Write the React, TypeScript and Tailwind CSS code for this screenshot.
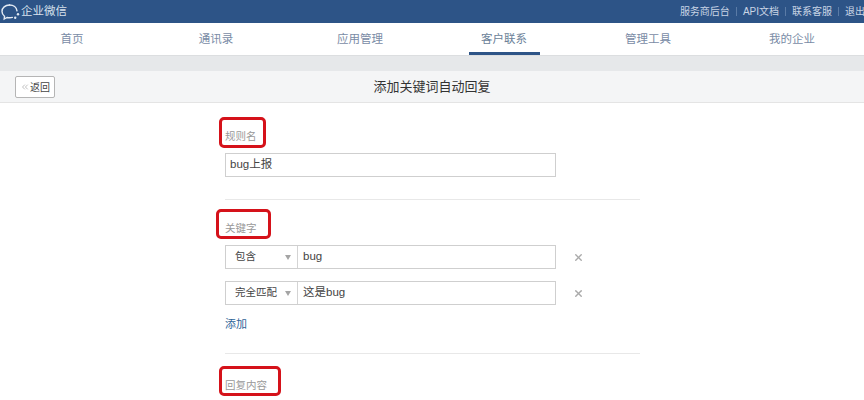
import { ChevronsLeft, X } from 'lucide-react';

const NAV_ITEMS = ['首页', '通讯录', '应用管理', '客户联系', '管理工具', '我的企业'];
const TOP_LINKS = ['服务商后台', 'API文档', '联系客服', '退出'];
const FONT = "font-['Liberation_Sans','Noto_Sans_CJK_SC',sans-serif]";

function Logo() {
  return (
    <svg width="21" height="20" viewBox="0 0 21 20" fill="none" className="shrink-0">
      <path
        d="M9.5 3C5.2 3 2 5.8 2 9.4c0 2 .9 3.6 2.5 4.8L4.2 17l2.9-1.5c.7.2 1.5.3 2.4.3 1 0 2-.1 2.9-.4"
        stroke="#e3eaf3"
        strokeWidth="1.4"
        strokeLinecap="round"
      />
      <path d="M9.5 3c4 0 7.1 2.4 7.5 5.9" stroke="#e3eaf3" strokeWidth="1.4" strokeLinecap="round" />
      <circle cx="15.2" cy="15.8" r="1.2" fill="#e3eaf3" />
      <circle cx="18" cy="12.2" r="1.2" fill="#e3eaf3" />
    </svg>
  );
}

function RedBox({ className }: { className: string }) {
  return <div className={`absolute rounded-[5px] border-[3px] border-[#d5121a] ${className}`} />;
}

function KeywordRow({ match, value }: { match: string; value: string }) {
  return (
    <div className="flex h-6 items-center">
      <div className="flex h-6 w-[331px] border border-[#cfcfcf] bg-white text-[11.5px] text-[#444]">
        <div className="flex w-[72px] items-center justify-between border-r border-[#d4d4d4] pl-[9px] pr-[6px]">
          <span className="whitespace-nowrap text-[10.5px]">{match}</span>
          <span className="h-0 w-0 shrink-0 border-x-[3px] border-t-[5px] border-x-transparent border-t-[#a5a5a5]" />
        </div>
        <div className="flex items-center pl-[5px]">{value}</div>
      </div>
      <X className="ml-[17px] h-[11px] w-[11px] text-[#aaaaaa]" strokeWidth={3} />
    </div>
  );
}

export default function App() {
  return (
    <div className={`relative h-[400px] w-[864px] overflow-hidden bg-white ${FONT}`}>
      <div className="flex h-[23px] items-center justify-between bg-[#2d5487] text-white">
        <div className="flex items-center text-[11.5px] text-[#d9e2ee]">
          <Logo />
          <span>企业微信</span>
        </div>
        <div className="-mr-[1px] flex items-center whitespace-nowrap text-[10px] text-[#c9d5e5]">
          {TOP_LINKS.map((link, i) => (
            <div key={link} className="flex items-center">
              {i > 0 && <span className="mx-[6px] h-[9px] w-px bg-[#5a7ba6]" />}
              <span>{link}</span>
            </div>
          ))}
        </div>
      </div>

      <div className="grid h-[32px] grid-cols-6 bg-white">
        {NAV_ITEMS.map((item) => (
          <div key={item} className="flex justify-center">
            <div
              className={
                item === '客户联系'
                  ? 'flex h-[32px] w-[71px] items-start justify-center border-b-[3px] border-[#2d5487] pt-[8px] text-[11.5px] text-[#6b7f98]'
                  : 'flex h-[32px] items-start justify-center pt-[8px] text-[11.5px] text-[#7a8ca6]'
              }
            >
              {item}
            </div>
          </div>
        ))}
      </div>

      <div className="h-[16px] border-t border-[#dcdee0] bg-[#e6e8ea]" />

      <div className="relative flex h-[32px] items-center justify-center border-b border-[#e4e4e4] bg-[#f4f5f6]">
        <button className="absolute left-[15px] top-[5px] flex h-[22px] w-[40px] items-center justify-center rounded-[2px] border border-[#b5b5b5] bg-white text-[10px] text-[#444]">
          <ChevronsLeft className="h-[10px] w-[10px] text-[#999]" strokeWidth={1.5} />
          返回
        </button>
        <h1 className="text-[13px] font-normal text-[#333]">添加关键词自动回复</h1>
      </div>

      <div className="ml-[225px] w-[415px]">
        <section className="h-[97px] border-b border-[#e8e8e8] pt-[26px]">
          <div className="text-[10.5px] leading-[14px] text-[#999999]">规则名</div>
          <div className="mt-[10px] flex h-6 w-[331px] items-center border border-[#cfcfcf] pl-[4px] text-[11.5px] text-[#444]">
            bug上报
          </div>
        </section>

        <section className="h-[154px] border-b border-[#e8e8e8] pt-[21px]">
          <div className="text-[10.5px] leading-[14px] text-[#999999]">关键字</div>
          <div className="mt-[10px] flex flex-col gap-[12px]">
            <KeywordRow match="包含" value="bug" />
            <KeywordRow match="完全匹配" value="这是bug" />
          </div>
          <a className="mt-[12px] block text-[11px] leading-[14px] text-[#2f6497]">添加</a>
        </section>

        <section className="pt-[24px]">
          <div className="text-[10.5px] leading-[14px] text-[#999999]">回复内容</div>
        </section>
      </div>

      <RedBox className="left-[219px] top-[117px] h-[31px] w-[47px]" />
      <RedBox className="left-[216px] top-[209px] h-[30px] w-[55px]" />
      <RedBox className="left-[219px] top-[366px] h-[30px] w-[62px]" />
    </div>
  );
}
